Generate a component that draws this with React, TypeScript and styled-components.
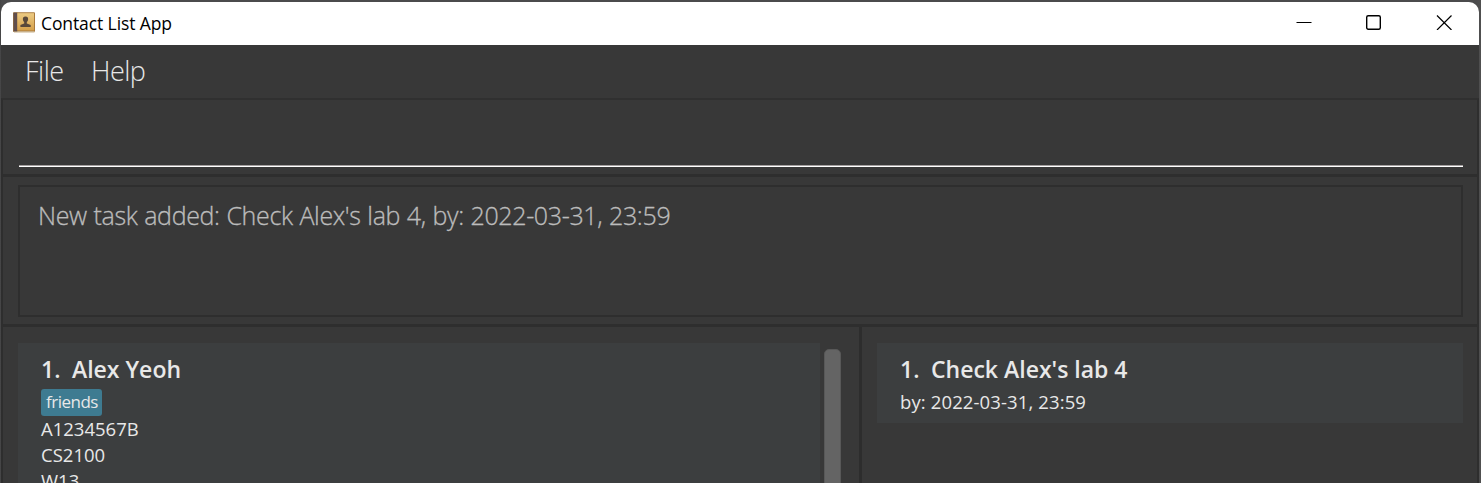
import React from 'react';
import styled, { createGlobalStyle } from 'styled-components';

const Global = createGlobalStyle`
  * { box-sizing: border-box; }
  html, body { margin: 0; padding: 0; overflow: hidden; }
  body { background: #4b4b4c; font-family: "Open Sans", "Noto Sans", sans-serif; }
`;

const Desktop = styled.div`
  width: 1481px;
  height: 483px;
  padding: 2px 2px 0 1px;
  background: linear-gradient(90deg, #444445 0, #4b4b4c 2px, #4b4b4c 1476px, #505050 1481px);
  overflow: hidden;
`;

const Window = styled.div`
  display: flex;
  flex-direction: column;
  width: 1478px;
  height: 481px;
  overflow: hidden;
  border-radius: 10px 10px 0 0;
  background: #383838;
`;

const Text = styled.span<{ $size: number; $spacing?: number; $weight?: number; $color?: string; $line: number }>`
  display: block;
  white-space: pre;
  font-size: ${(p) => p.$size}px;
  line-height: ${(p) => p.$line}px;
  letter-spacing: ${(p) => p.$spacing ?? 0}px;
  font-weight: ${(p) => p.$weight ?? 400};
  color: ${(p) => p.$color ?? '#e8e8e8'};
`;

const ResultText = styled(Text)`
  word-spacing: 0.6px;
  -webkit-text-stroke: 0.3px currentColor;
`;

const TitleBar = styled.header`
  display: flex;
  align-items: center;
  flex: 0 0 43px;
  padding: 0 27px 0 12px;
  background: #ffffff;
`;

const Title = styled.div`
  margin-bottom: 2px;
`;

const AppIcon = styled.svg`
  width: 22px;
  height: 21px;
  margin: 0 6px 3px 0;
`;

const WindowButtons = styled.div`
  display: flex;
  gap: 54px;
  margin-left: auto;
  margin-bottom: 3px;
  svg { display: block; width: 16px; height: 16px; }
`;

const MenuBar = styled.nav`
  display: flex;
  flex: 0 0 53px;
  padding: 7px 24px 0;
`;

const MenuItem = styled.div`
  flex: 0 0 66px;
`;

const CommandPane = styled.section`
  flex: 0 0 77px;
  padding: 65px 14px 0 16px;
  border: 1px solid #2e2e2e;
  border-width: 2px 2px 1px;
  border-top-color: #303030;
`;

const CommandField = styled.div`
  height: 2px;
  background: linear-gradient(#a39f9f 50%, #ffffff 50%);
`;

const ResultPane = styled.section`
  flex: 0 0 150px;
  padding: 8px 14px 0 15px;
  border: solid #2e2e2e;
  border-width: 2px 2px 1px;
`;

const ResultBox = styled.div`
  height: 132px;
  padding: 11px 18px;
  border: 2px solid #2e2e2e;
`;

const Lists = styled.main`
  display: flex;
  flex: 1;
  min-height: 0;
  border: solid #2e2e2e;
  border-width: 2px 2px 0;
`;

const ListPane = styled.section<{ $width: number }>`
  display: flex;
  flex: 0 0 ${(p) => p.$width}px;
  padding: 16px 14px 0 15px;
  &:first-child { border-right: 3px solid #2d2d2d; }
`;

const Card = styled.article<{ $width: number; $height: number }>`
  flex: 0 0 ${(p) => p.$width}px;
  height: ${(p) => p.$height}px;
  padding: 11px 23px;
  background: #3c3e3f;
`;

const Heading = styled.div`
  display: flex;
  margin-bottom: 4px;
`;

const Index = styled.div`
  flex: 0 0 31px;
`;

const Tag = styled.div`
  width: 61px;
  height: 27px;
  padding-left: 5px;
  border-radius: 3px;
  background: #3e7b91;
`;

const ScrollThumb = styled.div`
  width: 17px;
  height: 200px;
  margin: 6px 0 0 4px;
  border: 1px solid #585858;
  border-radius: 5px;
  background: #646464;
`;

const ContactBookIcon = () => (
  <AppIcon viewBox="0 0 22 21">
    <defs>
      <linearGradient id="cover" x1="0" y1="0" x2="0" y2="1">
        <stop offset="0" stopColor="#eccb83" />
        <stop offset="1" stopColor="#d5a04b" />
      </linearGradient>
    </defs>
    <rect x="0" y="0.3" width="22" height="19.7" rx="1" fill="#a9793b" />
    <rect x="1" y="19" width="20.5" height="1.5" fill="#c8b08a" />
    <rect x="0.5" y="0.6" width="3.8" height="18.8" fill="#604e4c" />
    <rect x="4.3" y="1.2" width="16.7" height="17.3" fill="url(#cover)" />
    <path d="M12.5 4.6c-2 0-2.8 1.3-2.6 3 .1 1.200.6 2 1.300 2.600v1.300L7.400 13v1.900h10.300V13l-3.900-1.500v-1.300c.7-.6 1.200-1.400 1.300-2.600.2-1.700-.6-3-2.600-3z" fill="#59483a" />
  </AppIcon>
);

const App = () => (
  <>
    <Global />
    <Desktop>
      <Window>
        <TitleBar>
          <ContactBookIcon />
          <Title><Text $size={17.5} $line={24} $spacing={-0.1} $color="#000000">Contact List App</Text></Title>
          <WindowButtons>
            <svg viewBox="0 0 16 16"><path d="M0.500 8.500H15.500" stroke="#000" /></svg>
            <svg viewBox="0 0 16 16"><rect x="0.700" y="1.700" width="13.600" height="13.600" rx="1.500" fill="none" stroke="#000" strokeWidth="1.400" /></svg>
            <svg viewBox="0 0 16 16"><path d="M1 1.500L15.500 16M15.500 1.500L1 16" stroke="#000" strokeWidth="1.200" /></svg>
          </WindowButtons>
        </TitleBar>
        <MenuBar>
          <MenuItem><Text $size={27} $line={37} $weight={300} $spacing={-0.5}>File</Text></MenuItem>
          <MenuItem><Text $size={27} $line={37} $weight={300} $spacing={-0.5}>Help</Text></MenuItem>
        </MenuBar>
        <CommandPane><CommandField /></CommandPane>
        <ResultPane>
          <ResultBox>
            <ResultText $size={25} $line={35} $weight={300} $spacing={-0.35} $color="#bcbcbc">New task added: Check Alex's lab 4, by: 2022-03-31, 23:59</ResultText>
          </ResultBox>
        </ResultPane>
        <Lists>
          <ListPane $width={859}>
            <Card $width={802} $height={180}>
              <Heading>
                <Index><Text $size={23} $line={31} $weight={600}>1.</Text></Index>
                <Text $size={23} $line={31} $weight={600}>Alex Yeoh</Text>
              </Heading>
              <Tag><Text $size={17} $line={26} $spacing={-0.5}>friends</Text></Tag>
              <Text $size={18.5} $line={26}>A1234567B</Text>
              <Text $size={18.5} $line={26}>CS2100</Text>
              <Text $size={18.5} $line={26}>W13</Text>
            </Card>
            <ScrollThumb />
          </ListPane>
          <ListPane $width={615}>
            <Card $width={586} $height={80}>
              <Heading>
                <Index><Text $size={23} $line={31} $weight={600}>1.</Text></Index>
                <Text $size={23} $line={31} $weight={600}>Check Alex's lab 4</Text>
              </Heading>
              <Text $size={18.5} $line={26} $spacing={0.12}>by: 2022-03-31, 23:59</Text>
            </Card>
          </ListPane>
        </Lists>
      </Window>
    </Desktop>
  </>
);

export default App;
